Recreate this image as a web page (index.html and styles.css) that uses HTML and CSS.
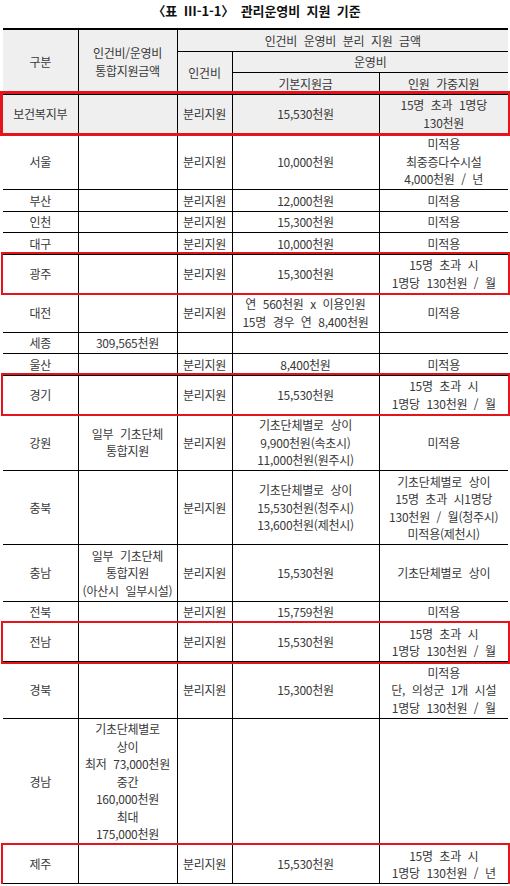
FILE: index.html
```html
<!DOCTYPE html>
<html lang="ko">
<head>
<meta charset="utf-8">
<link rel="stylesheet" href="styles.css">
</head>
<body>
<div class="page">
  <h1 class="title">〈표 Ⅲ-1-1〉 관리운영비 지원 기준</h1>
  <table class="tbl">
    <colgroup>
      <col class="c1"><col class="c2"><col class="c3"><col class="c4"><col class="c5">
    </colgroup>
    <thead>
      <tr>
        <th rowspan="3">구분</th>
        <th rowspan="3">인건비/운영비<br>통합지원금액</th>
        <th colspan="3">인건비 운영비 분리 지원 금액</th>
      </tr>
      <tr>
        <th rowspan="2">인건비</th>
        <th colspan="2">운영비</th>
      </tr>
      <tr>
        <th>기본지원금</th>
        <th>인원 가중지원</th>
      </tr>
    </thead>
    <tbody>
      <tr class="gray hl strong"><td>보건복지부</td><td></td><td>분리지원</td><td>15,530천원</td><td>15명 초과 1명당<br>130천원</td></tr>
      <tr><td>서울</td><td></td><td>분리지원</td><td>10,000천원</td><td>미적용<br>최중증다수시설<br>4,000천원 / 년</td></tr>
      <tr><td>부산</td><td></td><td>분리지원</td><td>12,000천원</td><td>미적용</td></tr>
      <tr><td>인천</td><td></td><td>분리지원</td><td>15,300천원</td><td>미적용</td></tr>
      <tr><td>대구</td><td></td><td>분리지원</td><td>10,000천원</td><td>미적용</td></tr>
      <tr class="hl"><td>광주</td><td></td><td>분리지원</td><td>15,300천원</td><td>15명 초과 시<br>1명당 130천원 / 월</td></tr>
      <tr><td>대전</td><td></td><td>분리지원</td><td>연 560천원 x 이용인원<br>15명 경우 연 8,400천원</td><td>미적용</td></tr>
      <tr><td>세종</td><td>309,565천원</td><td></td><td></td><td></td></tr>
      <tr><td>울산</td><td></td><td>분리지원</td><td>8,400천원</td><td>미적용</td></tr>
      <tr class="hl"><td>경기</td><td></td><td>분리지원</td><td>15,530천원</td><td>15명 초과 시<br>1명당 130천원 / 월</td></tr>
      <tr><td>강원</td><td>일부 기초단체<br>통합지원</td><td>분리지원</td><td>기초단체별로 상이<br>9,900천원(속초시)<br>11,000천원(원주시)</td><td>미적용</td></tr>
      <tr><td>충북</td><td></td><td>분리지원</td><td>기초단체별로 상이<br>15,530천원(청주시)<br>13,600천원(제천시)</td><td>기초단체별로 상이<br>15명 초과 시1명당<br>130천원 / 월(청주시)<br>미적용(제천시)</td></tr>
      <tr><td>충남</td><td>일부 기초단체<br>통합지원<br>(아산시 일부시설)</td><td>분리지원</td><td>15,530천원</td><td>기초단체별로 상이</td></tr>
      <tr><td>전북</td><td></td><td>분리지원</td><td>15,759천원</td><td>미적용</td></tr>
      <tr class="hl"><td>전남</td><td></td><td>분리지원</td><td>15,530천원</td><td>15명 초과 시<br>1명당 130천원 / 월</td></tr>
      <tr><td>경북</td><td></td><td>분리지원</td><td>15,300천원</td><td>미적용<br>단, 의성군 1개 시설<br>1명당 130천원 / 월</td></tr>
      <tr><td>경남</td><td>기초단체별로<br>상이<br>최저 73,000천원<br>중간<br>160,000천원<br>최대<br>175,000천원</td><td></td><td></td><td></td></tr>
      <tr class="hl"><td>제주</td><td></td><td>분리지원</td><td>15,530천원</td><td>15명 초과 시<br>1명당 130천원 / 년</td></tr>
    </tbody>
  </table>
</div>
</body>
</html>
```

FILE: styles.css
```css
html, body {
  margin: 0;
  padding: 0;
  background: #ffffff;
}

.page {
  width: 510px;
  font-family: "Noto Sans CJK KR", "Noto Sans", sans-serif;
  color: #383838;
}

.title {
  margin: 0;
  height: 28px;
  line-height: 21px;
  padding-left: 3px;
  text-align: center;
  font-size: 13px;
  font-weight: bold;
  color: #111111;
  letter-spacing: -0.1px;
  word-spacing: 3px;
}

.tbl {
  margin-left: 3px;
  width: 505px;
  table-layout: fixed;
  border-collapse: collapse;
  border-top: 2px solid #000;
  border-left: hidden;
  border-right: hidden;
  font-size: 12px;
  line-height: 17.5px;
  letter-spacing: -0.25px;
  word-spacing: 3.5px;
}

.c1 { width: 75px; }
.c2 { width: 99px; }
.c3 { width: 55px; }
.c4 { width: 147px; }
.c5 { width: 129px; }

.tbl th,
.tbl td {
  border: 1px solid #000;
  padding: 1.5px 0;
  text-align: center;
  vertical-align: middle;
  font-weight: normal;
  white-space: nowrap;
}

.tbl thead th {
  background: #efefef;
}

.tbl tr.gray td {
  background: #efefef;
}

.tbl tr.hl {
  outline: 2px solid #e3141c;
  outline-offset: 0;
}

.tbl tr.hl.strong {
  outline-width: 3px;
}
```
